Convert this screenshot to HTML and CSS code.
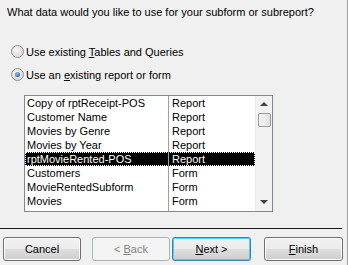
FILE: index.html
```html
<!DOCTYPE html>
<html lang="en">
<head>
  <meta charset="UTF-8" />
  <title>Subform Wizard</title>
  <link rel="stylesheet" href="styles.css">
</head>
<body>
  <div class="wizard">
    <p class="question">What data would you like to use for your subform or subreport?</p>

    <div class="choices">
      <label class="choice"><span class="radio"></span><span>Use existing <u>T</u>ables and Queries</span></label>
      <label class="choice"><span class="radio checked"></span><span>Use an <u>e</u>xisting report or form</span></label>
    </div>

    <div class="listbox">
      <div class="rows">
        <div class="row"><span>Copy of rptReceipt-POS</span><span>Report</span></div>
        <div class="row"><span>Customer Name</span><span>Report</span></div>
        <div class="row"><span>Movies by Genre</span><span>Report</span></div>
        <div class="row"><span>Movies by Year</span><span>Report</span></div>
        <div class="row selected"><span>rptMovieRented-POS</span><span>Report</span></div>
        <div class="row"><span>Customers</span><span>Form</span></div>
        <div class="row"><span>MovieRentedSubform</span><span>Form</span></div>
        <div class="row"><span>Movies</span><span>Form</span></div>
        <div class="row"><span>MovieSearch</span><span>Form</span></div>
      </div>
      <div class="scrollbar">
        <span class="arrow up"></span>
        <span class="thumb"></span>
        <span class="arrow down"></span>
      </div>
    </div>

    <div class="separator"></div>

    <div class="buttons">
      <button class="btn">Cancel</button>
      <button class="btn back" disabled>&lt; <u>B</u>ack</button>
      <button class="btn next"><u>N</u>ext &gt;</button>
      <button class="btn finish"><u>F</u>inish</button>
    </div>
  </div>
</body>
</html>
```
FILE: styles.css
```css
body {
  margin: 0;
  background-color: #f0f0f0;
  font-family: 'Liberation Sans', Arial, sans-serif;
  font-size: 11px;
  color: #000;
}
.wizard {
  width: 347px;
  height: 265px;
  border-right: 1px solid #a0a0a0;
}
.question {
  margin: 0;
  padding: 6px 0 0 7px;
  line-height: 13px;
}
.choices {
  margin-top: 26px;
  padding-left: 11px;
  display: flex;
  flex-direction: column;
  gap: 10px;
}
.choice {
  display: flex;
  align-items: center;
  height: 13px;
  gap: 2px;
}
.radio {
  width: 11px;
  height: 11px;
  border: 1px solid #8e8f8f;
  border-radius: 50%;
  background: radial-gradient(circle at 40% 35%, #f4f4f4, #d4d4d4);
  display: flex;
  align-items: center;
  justify-content: center;
}
.radio.checked::after {
  content: "";
  width: 5px;
  height: 5px;
  border-radius: 50%;
  background: radial-gradient(circle at 40% 35%, #8ec5ee, #164c7c);
}
.listbox {
  margin: 14px 0 0 24px;
  width: 247px;
  height: 115px;
  border: 1px solid #828790;
  background-color: #fff;
  display: flex;
  overflow: hidden;
}
.rows {
  width: 230px;
  position: relative;
}
.rows::after {
  content: "";
  position: absolute;
  left: 143px;
  top: 0;
  bottom: 0;
  border-left: 1px solid #a0a0a0;
}
.row {
  display: grid;
  grid-template-columns: 144px 86px;
  height: 14px;
  line-height: 14px;
}
.row span {
  padding-left: 2px;
  white-space: nowrap;
  overflow: hidden;
}
.row span + span {
  padding-left: 3px;
}
.row.selected {
  background-color: #000;
  color: #fffff0;
  outline: 1px dotted #fff;
  outline-offset: -1px;
}
.scrollbar {
  width: 17px;
  background-color: #f2f2f2;
  border-left: 1px solid #ebebeb;
  box-sizing: border-box;
  display: flex;
  flex-direction: column;
  align-items: center;
  position: relative;
}
.arrow {
  width: 0;
  height: 0;
  border-left: 4px solid transparent;
  border-right: 4px solid transparent;
}
.arrow.up {
  margin-top: 6px;
  border-bottom: 4px solid #404040;
}
.arrow.down {
  position: absolute;
  bottom: 7px;
  border-top: 4px solid #404040;
}
.thumb {
  margin-top: 7px;
  width: 13px;
  height: 14px;
  box-sizing: border-box;
  border: 1px solid #9a9a9a;
  border-radius: 2px;
  background: linear-gradient(to right, #f4f4f4, #e2e2e2);
}
.separator {
  margin-top: 16px;
  width: 342px;
  border-top: 1px solid #1a1a1a;
}
.buttons {
  margin-top: 8px;
  padding-left: 3px;
  display: flex;
}
.btn {
  width: 78px;
  height: 24px;
  padding: 0;
  font-family: inherit;
  font-size: 11px;
  color: #000;
  border: 1px solid #707070;
  border-radius: 3px;
  background: linear-gradient(#f2f2f2 0%, #ebebeb 48%, #dddddd 52%, #cfcfcf 100%);
  box-shadow: inset 0 0 0 1px #fcfcfc;
}
.btn.back {
  margin-left: 11px;
  color: #838383;
  border-color: #adb2b5;
  background: #f4f4f4;
  box-shadow: none;
}
.btn.next {
  margin-left: 2px;
  width: 79px;
  border-color: #3c7fb1;
  box-shadow: inset 0 0 0 1px #48d0ff;
}
.btn.finish {
  margin-left: 13px;
  width: 79px;
}
```
